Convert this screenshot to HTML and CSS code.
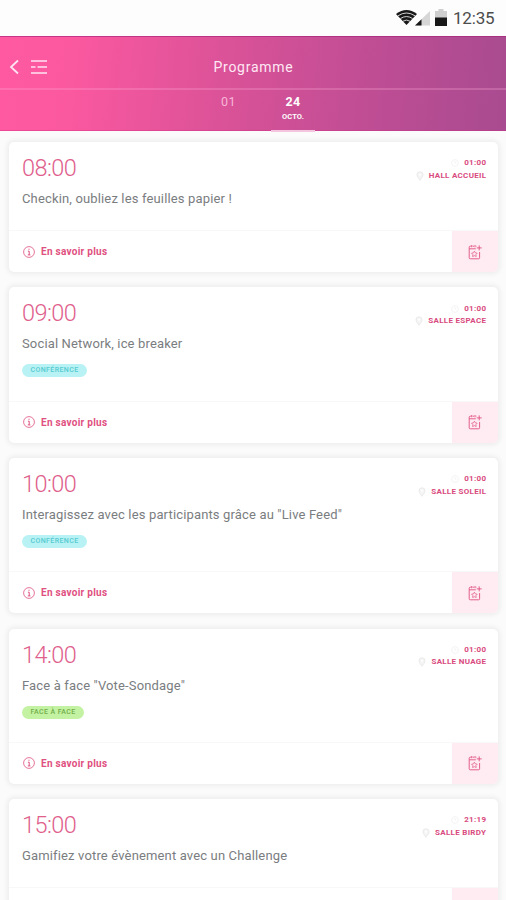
FILE: index.html
```html
<!DOCTYPE html>
<html lang="fr">
<head>
<meta charset="utf-8">
<title>Programme</title>
<link rel="stylesheet" href="styles.css">
</head>
<body>
<svg class="defs" width="0" height="0" aria-hidden="true">
  <symbol id="info" viewBox="0 0 12 12"><circle cx="6" cy="6" r="5.4" fill="none" stroke="currentColor" stroke-width=".8"/><path d="M4.9 5.2H6.2V8.8M4.8 8.9H7.4M6 2.7V3.8" fill="none" stroke="currentColor" stroke-width="1"/></symbol>
  <symbol id="plan" viewBox="0 0 14 16"><path d="M1.2 4.8H7.8M8.4 2.2H7.8M6 2.2H4.6M2.9 2.2H2.2Q1.2 2.2 1.200 3.200V13.800Q1.200 14.800 2.200 14.800H10.600Q11.600 14.800 11.600 13.800V8M3.700 1V3.300M7 1V3.300M11.200 1.400V6.400M8.700 3.900H13.700" fill="none" stroke="currentColor" stroke-width=".9"/><path d="M6.4 7.200L7.300 8.800L9.200 9.200L7.900 10.600L8.200 12.500L6.400 11.700L4.600 12.500L4.900 10.600L3.600 9.200L5.500 8.800Z" fill="none" stroke="currentColor" stroke-width=".7"/></symbol>
  <symbol id="pin" viewBox="0 0 8 10"><path d="M4 9.3C2.5 7.2 1 5.5 1 3.8a3 3 0 0 1 6 0C7 5.5 5.500 7.200 4 9.300Z" fill="#f5f5f5" stroke="#e6e6e6" stroke-width=".8"/><circle cx="4" cy="3.800" r="1" fill="#fff"/></symbol>
  <symbol id="clock" viewBox="0 0 8 8"><circle cx="4" cy="4" r="3.400" fill="none" stroke="#f3f3f3"/><path d="M4 2V4H5.500" fill="none" stroke="#f3f3f3"/></symbol>
</svg>
<div class="status">
  <svg width="39" height="20" viewBox="0 0 39 20">
    <path d="M0 6Q10.500 -2 21 6L10.500 17Z" fill="#181818"/>
    <path d="M2 7.800Q10.500 2.200 19 7.800M4.500 10.500Q10.500 6.600 16.500 10.500M7 13.200Q10.500 11 14 13.200" fill="none" stroke="#fff" stroke-width=".8"/>
    <path d="M19 17.500L34 3V17.500Z" fill="#d6d6d6"/><path d="M19 17.500L25.500 11.200V17.500Z" fill="#181818"/>
  </svg>
  <svg class="battery" width="12" height="17" viewBox="0 0 12 17"><path d="M3.500 0H8.500V2H12V17H0V2H3.500Z" fill="#cfcfcf"/><path d="M0 8.500H12V17H0Z" fill="#181818"/></svg>
  <span>12:35</span>
</div>
<header class="header">
  <div class="bar">
    <svg width="34" height="18" viewBox="0 0 34 18" fill="none" stroke="#ffe3f2">
      <path d="M10 2.500L3 9L10 15.500" stroke-width="1.800"/>
      <path d="M23 3H39M23 9H27.500M29.500 9H39M23 15H39" stroke-width="1.700"/>
    </svg>
    <h1>Programme</h1>
  </div>
  <nav class="days">
    <a class="day">01</a>
    <a class="day active">24<small>OCTO.</small></a>
  </nav>
</header>
<main class="list">
  <article class="card short">
    <div class="body"><div class="main"><time>08:00</time><h2>Checkin, oubliez les feuilles papier !</h2></div>
      <div class="meta"><p><svg width="8" height="8"><use href="#clock"/></svg><b class="dur">01:00</b></p><p><svg width="8" height="10"><use href="#pin"/></svg><b>HALL ACCUEIL</b></p></div></div>
    <div class="foot"><svg width="12" height="12"><use href="#info"/></svg><span>En savoir plus</span><div class="add"><svg width="14" height="16"><use href="#plan"/></svg></div></div>
  </article>
  <article class="card">
    <div class="body"><div class="main"><time>09:00</time><h2>Social Network, ice breaker</h2><em class="tag">CONFÉRENCE</em></div>
      <div class="meta"><p><svg width="8" height="8"><use href="#clock"/></svg><b class="dur">01:00</b></p><p><svg width="8" height="10"><use href="#pin"/></svg><b>SALLE ESPACE</b></p></div></div>
    <div class="foot"><svg width="12" height="12"><use href="#info"/></svg><span>En savoir plus</span><div class="add"><svg width="14" height="16"><use href="#plan"/></svg></div></div>
  </article>
  <article class="card">
    <div class="body"><div class="main"><time>10:00</time><h2>Interagissez avec les participants grâce au "Live Feed"</h2><em class="tag">CONFÉRENCE</em></div>
      <div class="meta"><p><svg width="8" height="8"><use href="#clock"/></svg><b class="dur">01:00</b></p><p><svg width="8" height="10"><use href="#pin"/></svg><b>SALLE SOLEIL</b></p></div></div>
    <div class="foot"><svg width="12" height="12"><use href="#info"/></svg><span>En savoir plus</span><div class="add"><svg width="14" height="16"><use href="#plan"/></svg></div></div>
  </article>
  <article class="card">
    <div class="body"><div class="main"><time>14:00</time><h2>Face à face "Vote-Sondage"</h2><em class="tag green">FACE À FACE</em></div>
      <div class="meta"><p><svg width="8" height="8"><use href="#clock"/></svg><b class="dur">01:00</b></p><p><svg width="8" height="10"><use href="#pin"/></svg><b>SALLE NUAGE</b></p></div></div>
    <div class="foot"><svg width="12" height="12"><use href="#info"/></svg><span>En savoir plus</span><div class="add"><svg width="14" height="16"><use href="#plan"/></svg></div></div>
  </article>
  <article class="card short">
    <div class="body"><div class="main"><time>15:00</time><h2>Gamifiez votre évènement avec un Challenge</h2></div>
      <div class="meta"><p><svg width="8" height="8"><use href="#clock"/></svg><b class="dur">21:19</b></p><p><svg width="8" height="10"><use href="#pin"/></svg><b>SALLE BIRDY</b></p></div></div>
    <div class="foot"><div class="add"></div></div>
  </article>
</main>
</body>
</html>
```
FILE: styles.css
```css
* { box-sizing: border-box; margin: 0; }
html, body { height: 900px; overflow: hidden; }
body { background: #fbfbfb; font-family: Roboto, "Liberation Sans", sans-serif; }
svg { display: block; flex: none; }
.defs { display: none; }
.status { height: 36px; background: #fdfdfd; display: flex; align-items: center; padding: 0 11px 0 396px; font-size: 17px; color: #4c4c4c; }
.status .battery { margin-top: -1px; }
.status span { margin-left: 6px; white-space: nowrap; letter-spacing: -.2px; }
.header { height: 95px; background: linear-gradient(95deg, #ff5aa1 0%, #fa589f 15%, #d55197 50%, #bd4d94 75%, #a94b90 100%); border-top: 1px solid rgba(165, 30, 120, .6); border-bottom: 1px solid rgba(205, 40, 130, .35); color: #ffe8f4; }
.bar { height: 51px; display: grid; grid-template-columns: 1fr auto 1fr; align-items: center; padding: 9px 0 0 8px; }
.bar svg { overflow: visible; }
.bar h1 { font-size: 14px; font-weight: 400; letter-spacing: .75px; margin-left: -7px; }
.days { height: 43px; border-top: 2px solid rgba(255, 170, 215, .28); display: flex; padding-left: 207px; gap: 21px; }
.day { width: 43px; height: 42px; text-align: center; font-size: 12.500px; line-height: 15px; padding-top: 4px; letter-spacing: .4px; color: #f7b5d6; }
.day.active { width: 44px; color: #fff; font-weight: 700; border-bottom: 2px solid #f4c5df; }
.day small { display: block; font-size: 7.500px; letter-spacing: .1px; line-height: 15px; }
.list { padding: 11px 8px 0 9px; display: flex; flex-direction: column; gap: 15.400px; }
.card { background: #fff; border-radius: 5px; box-shadow: 0 0 5px 2px rgba(0, 0, 0, .06); height: 155.200px; flex: none; display: flex; flex-direction: column; overflow: hidden; }
.card.short { height: 130px; }
.body { flex: 1; display: flex; justify-content: space-between; padding: 13px 12px 0 13px; border-bottom: 1px solid #f8f8f8; }
.main { flex: 1; }
time { display: block; font-size: 23.500px; line-height: 26px; font-weight: 300; color: #e0608c; letter-spacing: -.55px; }
h2 { font-size: 13px; line-height: 18px; margin-top: 9px; font-weight: 400; color: #7a7d80; white-space: nowrap; letter-spacing: .15px; }
.tag { display: inline-flex; align-items: center; justify-content: center; margin-top: 11px; width: 65px; height: 13px; border-radius: 7px; background: #b9f2f4; color: #55cbd2; font: 500 7px/13px Roboto, sans-serif; letter-spacing: .4px; vertical-align: top; }
.tag.green { width: 62px; background: #c3f3a2; color: #73ae4b; }
.meta { color: #d94a7e; padding-top: 2px; }
.meta p { display: flex; justify-content: flex-end; align-items: center; height: 12.500px; gap: 5px; font-size: 8px; line-height: 12px; }
.meta b { font-weight: 700; letter-spacing: .3px; margin-right: -.3px; }
.foot { height: 41px; flex: none; display: flex; align-items: center; padding-left: 14px; color: #e0507f; }
.foot span { margin-left: 6px; font-size: 10px; font-weight: 700; letter-spacing: .27px; }
.add { margin-left: auto; width: 46px; height: 41px; background: #ffecf3; display: flex; align-items: center; justify-content: center; }
```
